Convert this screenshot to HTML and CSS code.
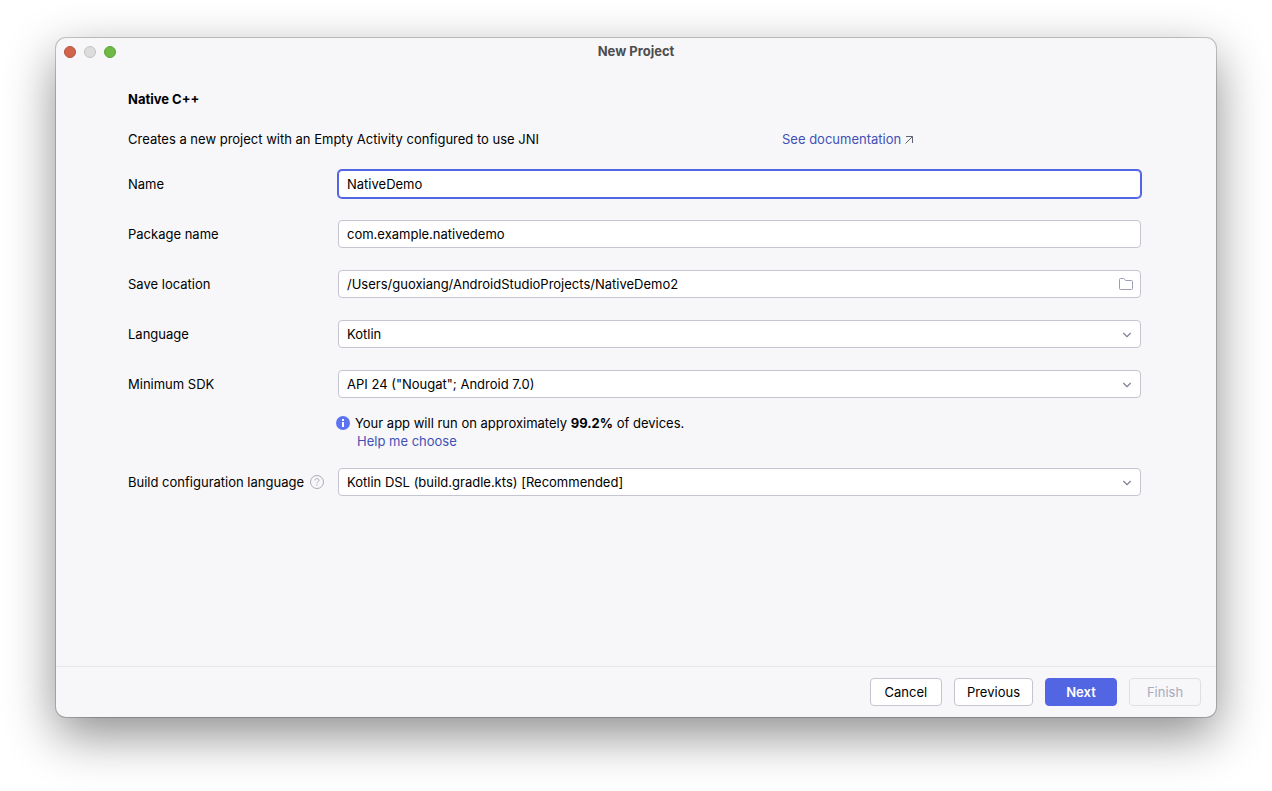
FILE: index.html
```html
<!DOCTYPE html>
<html lang="en">
<head>
<meta charset="utf-8">
<meta name="viewport" content="width=device-width, initial-scale=1">
<title>New Project</title>
<link rel="stylesheet" href="styles.css">
</head>

<body>
<div class="window">
   <div class="titlebar">
      <div class="lights">
         <span class="light close"></span>
         <span class="light minimize"></span>
         <span class="light zoom"></span>
      </div>
      <h1>New Project</h1>
   </div>

   <form class="wizard">
      <div class="content">
         <h2>Native C++</h2>
         <div class="intro">
            <p>Creates a new project with an Empty Activity configured to use JNI</p>
            <a href="#">See documentation
               <svg width="8" height="8" viewBox="0 0 8 8"><path d="M1 .5h6.5V7M7.5.5L.5 7.5" fill="none" stroke="#5e6272"/></svg></a>
         </div>

         <div class="row">
            <label for="name">Name</label>
            <div class="field"><input type="text" id="name" class="active" value="NativeDemo"></div>
         </div>
         <div class="row">
            <label for="package">Package name</label>
            <div class="field"><input type="text" id="package" value="com.example.nativedemo"></div>
         </div>
         <div class="row">
            <label for="location">Save location</label>
            <div class="field">
               <input type="text" id="location" value="/Users/guoxiang/AndroidStudioProjects/NativeDemo2">
               <button type="button" class="browse" aria-label="Browse">
                  <svg width="16" height="16" viewBox="0 0 16 16"><path d="M1.5 3.5a1 1 0 0 1 1-1h3.2l2.1 2h5.7a1 1 0 0 1 1 1v7a1 1 0 0 1-1 1h-11a1 1 0 0 1-1-1z" fill="none" stroke="#9a9db4"/></svg>
               </button>
            </div>
         </div>
         <div class="row">
            <label for="language">Language</label>
            <div class="field">
               <select id="language"><option>Kotlin</option></select>
               <svg class="arrow" width="16" height="16" viewBox="0 0 16 16"><path d="M4.3 7L8 10.6 11.7 7" fill="none" stroke="#7c7f93" stroke-width="1.2"/></svg>
            </div>
         </div>
         <div class="row">
            <label for="sdk">Minimum SDK</label>
            <div class="field">
               <select id="sdk"><option>API 24 ("Nougat"; Android 7.0)</option></select>
               <svg class="arrow" width="16" height="16" viewBox="0 0 16 16"><path d="M4.3 7L8 10.6 11.7 7" fill="none" stroke="#7c7f93" stroke-width="1.2"/></svg>
            </div>
         </div>

         <div class="hint">
            <svg width="14" height="14" viewBox="0 0 14 14"><circle cx="7" cy="7" r="7" fill="#5d74f0"/><path d="M6 3h2v2H6zM6 6h2v5H6z" fill="#fff"/></svg>
            <div>
               <p>Your app will run on approximately <b>99.2%</b> of devices.</p>
               <a href="#">Help me choose</a>
            </div>
         </div>

         <div class="row">
            <div class="label">
               <label for="build">Build configuration language</label>
               <svg width="14" height="14" viewBox="0 0 14 14" fill="none" stroke="#a8abb9"><circle cx="7" cy="7" r="6.5"/><path d="M5 5.5c0-1.1.8-1.9 2-1.9s2 .8 2 1.8c0 1.3-2 1.4-2 2.9M7 9.3v1.2"/></svg>
            </div>
            <div class="field">
               <select id="build"><option>Kotlin DSL (build.gradle.kts) [Recommended]</option></select>
               <svg class="arrow" width="16" height="16" viewBox="0 0 16 16"><path d="M4.3 7L8 10.6 11.7 7" fill="none" stroke="#7c7f93" stroke-width="1.2"/></svg>
            </div>
         </div>
      </div>

      <div class="footer">
         <button type="button">Cancel</button>
         <button type="button">Previous</button>
         <button type="submit" class="primary">Next</button>
         <button type="button" disabled>Finish</button>
      </div>
   </form>
</div>
</body>
</html>
```

FILE: styles.css
```css
*{margin:0;padding:0;box-sizing:border-box;}
body{display:flex;min-height:100vh;padding:38px 56px 74px;background:#fff;color:#000;font:13px/20px Inter,"Liberation Sans",sans-serif;}
input,select,button{font:inherit;color:inherit;}
svg{flex:none;}
a{color:#3f51b5;text-decoration:none;}

.window{flex:1;display:flex;flex-direction:column;background:#f7f7fa;border-radius:10px;box-shadow:0 0 0 1px rgba(0,0,0,.2),0 18px 50px rgba(0,0,0,.45);}
.titlebar{display:grid;grid-template-columns:1fr auto 1fr;align-items:center;height:28px;padding:0 8px;}
.titlebar h1{padding-bottom:2px;font-size:13px;font-weight:700;color:#4d4d4f;}
.lights{display:flex;gap:8px;}
.light{width:12px;height:12px;border:1px solid;border-radius:50%;}
.close{background:#d1644c;border-color:#b9523b;}
.minimize{background:#dddddd;border-color:#c3c3c5;}
.zoom{background:#6fba47;border-color:#5ba336;}

.wizard{flex:1;display:flex;flex-direction:column;}
.content{flex:1;padding:23px 75px 24px 72px;}
.content h2{margin-bottom:20px;font-size:13px;font-weight:700;}
.intro{display:flex;margin-bottom:10px;}
.intro p{width:654px;}

.row{display:grid;grid-template-columns:210px 1fr;align-items:center;padding:11px 0;}
.label{display:flex;align-items:center;gap:6px;}
.field{position:relative;}
.field input,.field select{display:block;width:100%;height:28px;padding:0 8px;background:#fff;border:1px solid #c4c5d1;border-radius:4px;outline:none;appearance:none;}
.field .active{border-color:#5265e3;box-shadow:0 0 0 1px #5265e3;}
.field #location{padding-right:32px;}
.arrow{position:absolute;right:6px;top:6px;pointer-events:none;}
.browse{position:absolute;right:7px;top:6px;width:16px;height:16px;background:none;border:0;}
.browse svg{display:block;}

.hint{display:flex;gap:5px;padding:5px 0 7px;margin-left:208px;line-height:18px;}
.hint svg{margin-top:2px;}
.hint a{display:block;margin-left:2px;}

.footer{display:flex;justify-content:flex-end;gap:12px;padding:11px 15px;border-top:1px solid #e6e7eb;}
.footer button{min-width:72px;height:28px;padding:0 12px;background:#fff;border:1px solid #c4c5d1;border-radius:4px;}
.footer .primary{background:#5265e3;border-color:#5265e3;color:#fff;font-weight:600;}
.footer button:disabled{background:none;border-color:#dedfe5;color:#a8a9bb;}
```
